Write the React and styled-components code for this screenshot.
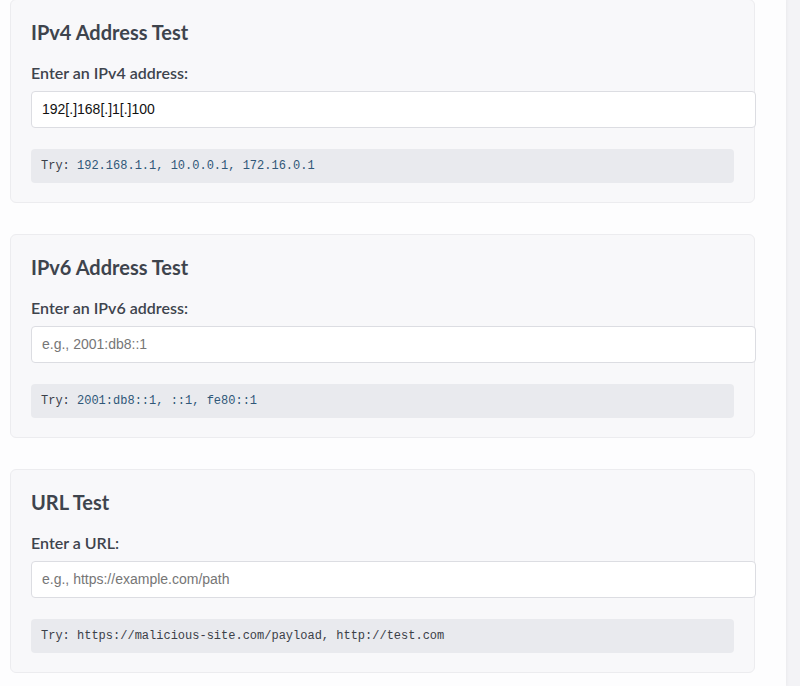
import React from 'react';
import styled, { createGlobalStyle } from 'styled-components';

const GlobalStyle = createGlobalStyle`
  html, body {
    margin: 0;
    padding: 0;
    background: #f3f3f6;
  }
  body {
    font-family: Lato, 'Open Sans', sans-serif;
    color: #3e444d;
  }
`;

const Page = styled.div`
  display: flex;
  min-height: 686px;
`;

const Main = styled.main`
  width: 786px;
  background: #fdfdfe;
  box-shadow: 1px 0 3px rgba(0, 0, 0, 0.04);
  padding: 0 0 0 10px;
  box-sizing: border-box;
  display: flex;
  flex-direction: column;
  gap: 31px;
  margin-top: -1px;
`;

const Card = styled.section`
  width: 745px;
  box-sizing: border-box;
  background: #f8f8fa;
  border: 1px solid #ececef;
  border-radius: 6px;
  padding: 20px 20px 19px;
`;

const Title = styled.h3`
  margin: 0 0 19px;
  font-size: 20px;
  line-height: 24px;
  font-weight: 700;
  color: #3e444d;
`;

const Label = styled.label`
  display: block;
  margin-bottom: 8px;
  font-size: 16px;
  line-height: 20px;
  font-weight: 600;
  color: #3e444d;
`;

const Input = styled.input`
  display: block;
  width: 100%;
  padding: 10px;
  border: 1px solid #dcdde2;
  border-radius: 4px;
  background: #fff;
  font-family: 'Liberation Sans', Arial, sans-serif;
  font-size: 14px;
  line-height: 15px;
  color: #111;
  outline: none;

  &::placeholder {
    color: #767676;
  }
`;

const Hint = styled.div`
  margin-top: 21px;
  padding: 10px;
  background: #e9eaee;
  border-radius: 4px;
  font-family: 'Liberation Mono', 'Courier New', monospace;
  font-size: 12px;
  line-height: 14px;
  color: #3b4048;
`;

const Value = styled.span`
  color: #2f5778;
`;

const tests = [
  {
    title: 'IPv4 Address Test',
    label: 'Enter an IPv4 address:',
    value: '192[.]168[.]1[.]100',
    placeholder: 'e.g., 192.168.1.1',
    hint: '192.168.1.1, 10.0.0.1, 172.16.0.1',
  },
  {
    title: 'IPv6 Address Test',
    label: 'Enter an IPv6 address:',
    value: '',
    placeholder: 'e.g., 2001:db8::1',
    hint: '2001:db8::1, ::1, fe80::1',
  },
  {
    title: 'URL Test',
    label: 'Enter a URL:',
    value: '',
    placeholder: 'e.g., https://example.com/path',
    hint: 'https://malicious-site.com/payload, http://test.com',
    plain: true,
  },
];

const TestCard = ({ test }) => {
  const [value, setValue] = React.useState(test.value);
  return (
    <Card>
      <Title>{test.title}</Title>
      <Label>{test.label}</Label>
      <Input
        type="text"
        value={value}
        placeholder={test.placeholder}
        onChange={e => setValue(e.target.value)}
      />
      <Hint>
        Try: {test.plain ? test.hint : <Value>{test.hint}</Value>}
      </Hint>
    </Card>
  );
};

const App = () =>
  <>
    <GlobalStyle />
    <Page>
      <Main>
        {tests.map(t => <TestCard key={t.title} test={t} />)}
      </Main>
    </Page>
  </>;

export default App;
